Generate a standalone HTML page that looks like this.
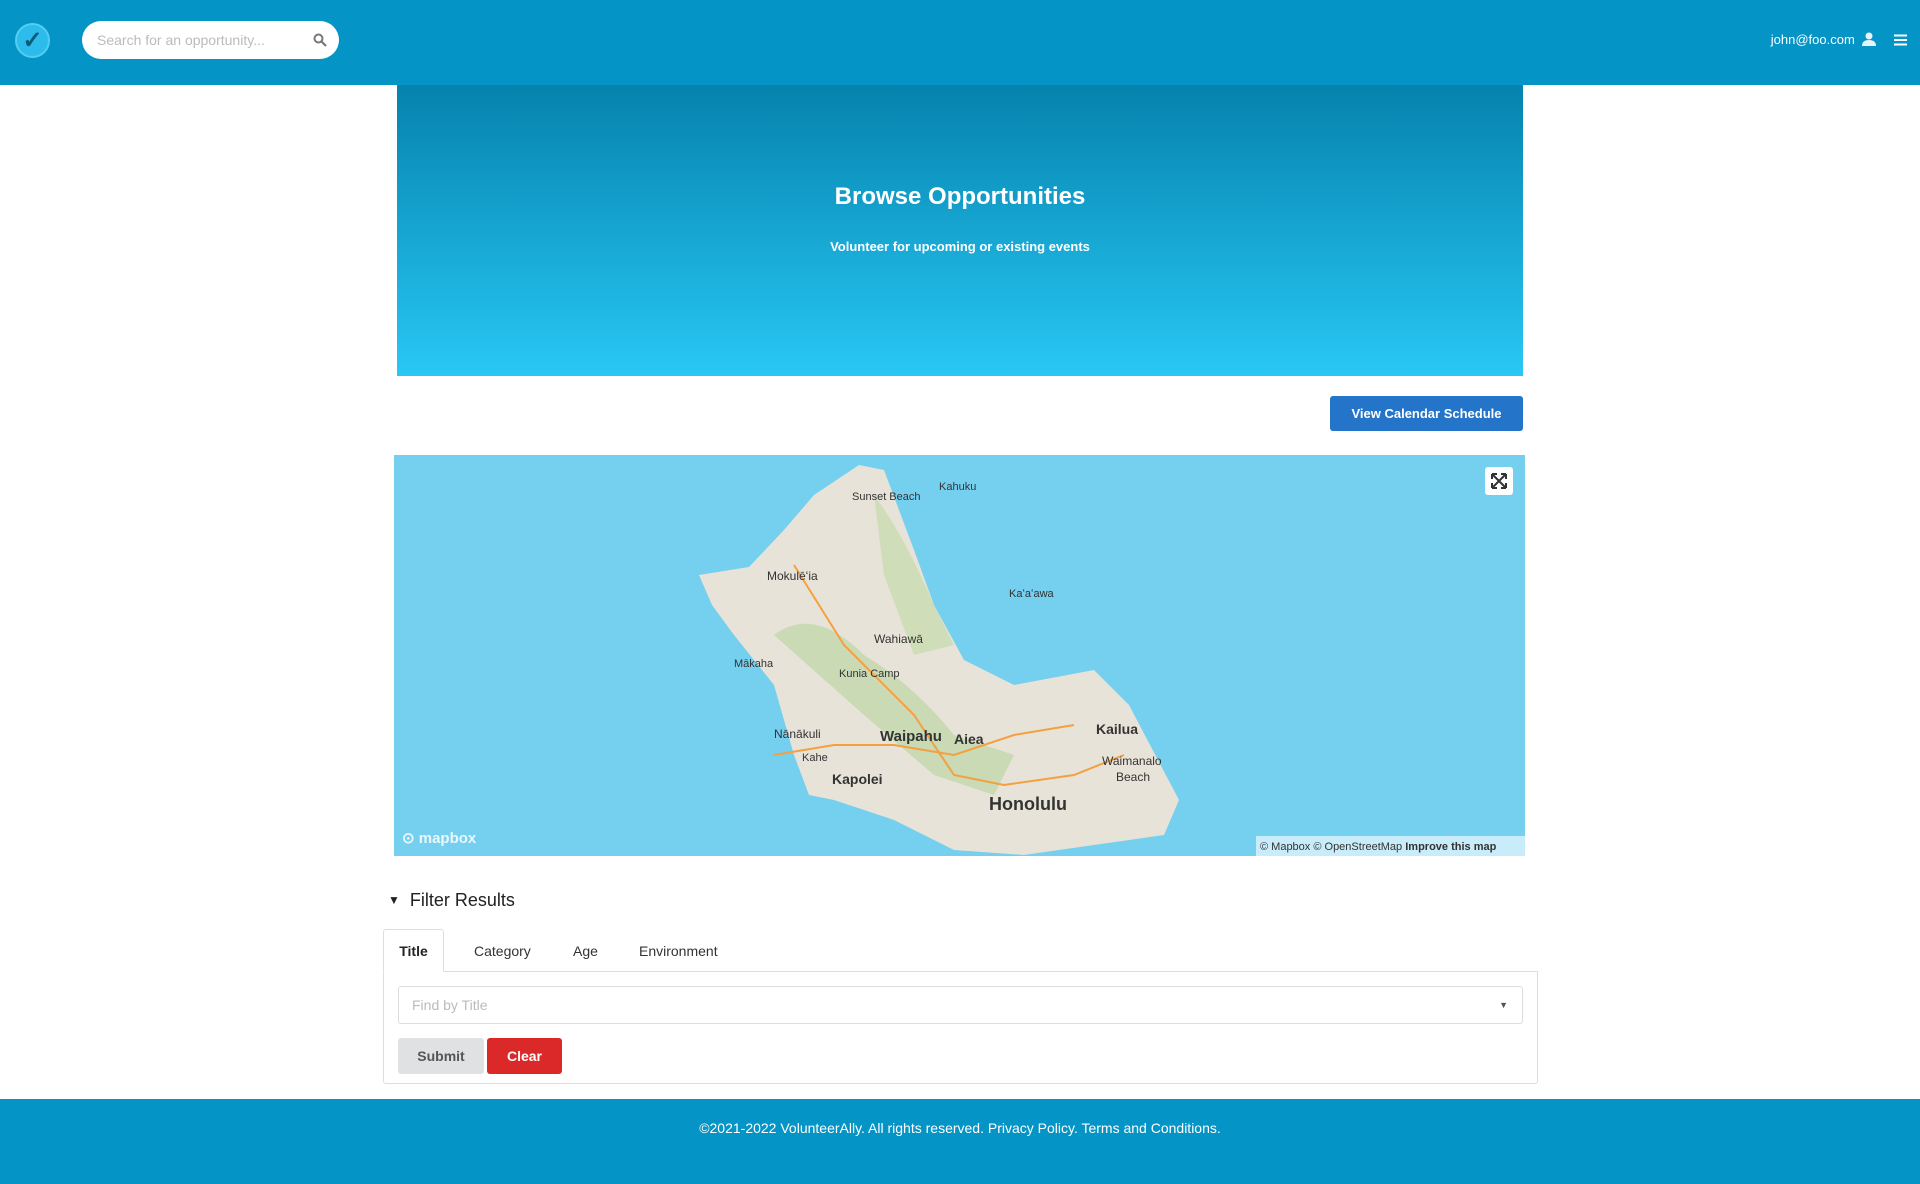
<!DOCTYPE html>
<html><head><meta charset="utf-8"><style>
*{box-sizing:border-box;margin:0;padding:0}
body{width:1920px;height:1184px;overflow:hidden;font-family:"Liberation Sans",sans-serif;background:#fff;position:relative}
.hdr{position:absolute;left:0;top:0;width:1920px;height:85px;background:#0494c5}
.logo{position:absolute;left:15px;top:23px;width:35px;height:35px;border-radius:50%;background:#2bbcec;border:2px solid #53cdf3;color:#0e5a7a;font-size:24px;font-weight:bold;text-align:center;line-height:31px}
.search{position:absolute;left:82px;top:21px;width:257px;height:38px;background:#fff;border-radius:19px;color:#bbb;font-size:14px;line-height:38px;padding-left:15px}
.user{position:absolute;right:44px;top:32px;color:#fff;font-size:13px}
.hero{position:absolute;left:397px;top:85px;width:1126px;height:291px;background:linear-gradient(#0483ad,#29c7f5);color:#fff;text-align:center}
.hero h1{position:absolute;top:98px;width:100%;font-size:24px}
.hero p{position:absolute;top:154px;width:100%;font-size:13px;font-weight:bold}
.btn{position:absolute;left:1330px;top:396px;width:193px;height:35px;background:#2474c9;border-radius:3px;color:#fff;font-weight:bold;font-size:13px;text-align:center;line-height:35px}
.map{position:absolute;left:394px;top:455px;width:1131px;height:401px;background:#75cfef;overflow:hidden}
.fr{position:absolute;left:388px;top:890px;font-size:18px;color:#222}
.card{position:absolute;left:383px;top:971px;width:1155px;height:113px;border:1px solid #ddd;border-radius:0 0 3px 3px}
.tab{position:absolute;top:929px;font-size:14px;color:#333}
.tabA{left:383px;width:61px;height:43px;border:1px solid #ddd;border-bottom:1px solid #fff;border-radius:3px 3px 0 0;background:#fff;text-align:center;line-height:42px;font-weight:bold;color:#222;z-index:2}
.inp{position:absolute;left:398px;top:986px;width:1125px;height:38px;border:1px solid #ddd;border-radius:3px;color:#bbb;font-size:14px;line-height:36px;padding-left:13px}
.b2{position:absolute;top:1038px;height:36px;border-radius:3px;font-weight:bold;font-size:14px;text-align:center;line-height:36px}
.ftr{position:absolute;left:0;top:1099px;width:1920px;height:85px;background:#0494c5;color:#fff;font-size:14px;text-align:center;line-height:58px}
.lbl{font-family:"Liberation Sans",sans-serif;fill:#333}
</style></head><body>
<div class="hdr">
<div class="logo">✓</div>
<div class="search">Search for an opportunity...<svg style="position:absolute;right:12px;top:12px" width="14" height="14" viewBox="0 0 14 14"><circle cx="5.5" cy="5.5" r="4" stroke="#777" stroke-width="2" fill="none"/><path d="M8.5 8.5L13 13" stroke="#777" stroke-width="2.2"/></svg></div>
<div class="user">john@foo.com &nbsp;<svg width="14" height="14" viewBox="0 0 14 14" style="vertical-align:-2px"><circle cx="7" cy="4" r="3.5" fill="#e6f4fa"/><path d="M0 14q0-6 7-6t7 6z" fill="#e6f4fa"/></svg></div>
<svg style="position:absolute;left:1894px;top:34px" width="13" height="12" viewBox="0 0 13 12"><path d="M0 1.5h13M0 6h13M0 10.5h13" stroke="#fff" stroke-width="2"/></svg>
</div>
<div class="hero"><h1>Browse Opportunities</h1><p>Volunteer for upcoming or existing events</p></div>
<div class="btn">View Calendar Schedule</div>
<div class="map">
<svg width="1131" height="401" viewBox="0 0 1131 401">
<path d="M305 120 L355 112 L390 75 L420 40 L465 10 L490 15 L505 55 L520 95 L540 150 L570 205 L620 230 L700 215 L735 250 L785 345 L770 380 L700 390 L630 400 L560 395 L500 365 L440 345 L415 340 L400 300 L380 230 L340 180 L318 150 Z" fill="#e8e3d8"/>
<path d="M380 180 Q420 150 470 200 Q520 230 560 280 L620 300 L600 340 L540 320 L470 260 Z" fill="#bcd6a6" opacity=".7"/>
<path d="M480 40 Q510 80 540 150 L560 190 L520 200 L490 120 Z" fill="#c8dcb0" opacity=".8"/>
<path d="M400 110 L450 190 L520 260 L560 320 L610 330 L680 320 L730 300" stroke="#f5a040" stroke-width="2" fill="none"/>
<path d="M380 300 L440 290 L500 290 L560 300 L620 280 L680 270" stroke="#f5a040" stroke-width="2" fill="none"/>
<text class="lbl" x="458" y="45" font-size="11">Sunset Beach</text>
<text class="lbl" x="545" y="35" font-size="11">Kahuku</text>
<text class="lbl" x="373" y="125" font-size="12">Mokulēʻia</text>
<text class="lbl" x="615" y="142" font-size="11">Kaʻaʻawa</text>
<text class="lbl" x="480" y="188" font-size="12">Wahiawā</text>
<text class="lbl" x="340" y="212" font-size="11">Mākaha</text>
<text class="lbl" x="445" y="222" font-size="11">Kunia Camp</text>
<text class="lbl" x="380" y="283" font-size="12">Nānākuli</text>
<text class="lbl" x="486" y="286" font-size="15" font-weight="bold">Waipahu</text>
<text class="lbl" x="560" y="289" font-size="14" font-weight="bold">Aiea</text>
<text class="lbl" x="702" y="279" font-size="14" font-weight="bold">Kailua</text>
<text class="lbl" x="408" y="306" font-size="11">Kahe</text>
<text class="lbl" x="438" y="329" font-size="14" font-weight="bold">Kapolei</text>
<text class="lbl" x="708" y="310" font-size="12">Waimanalo</text>
<text class="lbl" x="722" y="326" font-size="12">Beach</text>
<text class="lbl" x="595" y="355" font-size="18" font-weight="bold">Honolulu</text>
<rect x="1091" y="12" width="28" height="28" rx="3" fill="#fff"/>
<path d="M1098 19l14 14M1112 19l-14 14M1098 19h5M1098 19v5M1112 19h-5M1112 19v5M1098 33h5M1098 33v-5M1112 33h-5M1112 33v-5" stroke="#333" stroke-width="2"/>
<text x="8" y="388" font-size="15" font-weight="bold" fill="#fff" opacity=".85">⊙ mapbox</text>
<rect x="862" y="381" width="269" height="20" fill="#fff" opacity=".6"/>
<text x="866" y="395" font-size="11" fill="#333">© Mapbox © OpenStreetMap <tspan font-weight="bold">Improve this map</tspan></text>
</svg></div>
<div class="fr"><span style="font-size:12px;vertical-align:2px">▼</span>&nbsp; Filter Results</div>
<div class="tab tabA">Title</div>
<div class="tab" style="left:474px;top:943px">Category</div>
<div class="tab" style="left:573px;top:943px">Age</div>
<div class="tab" style="left:639px;top:943px">Environment</div>
<div class="card"></div>
<div class="inp">Find by Title<span style="position:absolute;right:14px;top:0;color:#555;font-size:9px">▼</span></div>
<div class="b2" style="left:398px;width:86px;background:#e0e1e2;color:#555">Submit</div>
<div class="b2" style="left:487px;width:75px;background:#db2828;color:#fff">Clear</div>
<div class="ftr">©2021-2022 VolunteerAlly. All rights reserved. Privacy Policy. Terms and Conditions.</div>
</body></html>
